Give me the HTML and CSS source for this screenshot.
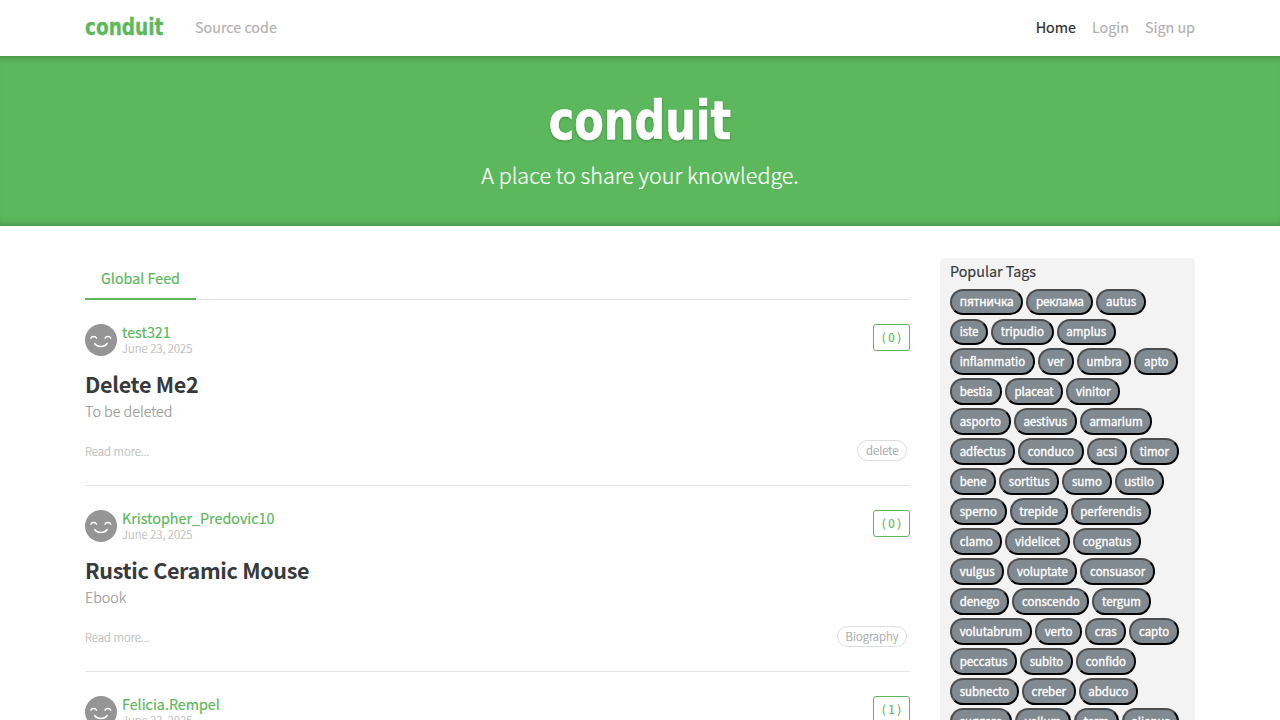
FILE: index.html
```html
<!DOCTYPE html>
<html lang="en">
<head>
<meta charset="utf-8">
<title>Conduit</title>
<link rel="stylesheet" href="styles.css">
</head>
<body>
<svg class="defs" width="0" height="0"><symbol id="smile" viewBox="0 0 32 32"><circle cx="16" cy="16" r="16" fill="#959595"/><path d="M5.8 14.2c.8-2.3 4.8-2.3 5.7 0M20 14.2c.9-2.3 4.9-2.3 5.8 0M9.6 19.5c2.7 4 9.9 4 12.6 0" fill="none" stroke="#fff" stroke-width="1.4" stroke-linecap="round"/></symbol></svg>
<nav class="navbar">
  <a class="brand">conduit</a>
  <a class="nav-link source">Source code</a>
  <div class="nav-right"><a class="nav-link active">Home</a><a class="nav-link">Login</a><a class="nav-link">Sign up</a></div>
</nav>
<header class="banner">
  <h1 class="logo">conduit</h1>
  <p class="tagline">A place to share your knowledge.</p>
</header>
<main class="container">
  <section class="feed">
    <div class="tabs"><a class="tab">Global Feed</a></div>
    <article class="preview">
      <div class="meta"><svg class="avatar"><use href="#smile"/></svg><div class="info"><a class="author">test321</a><span class="date">June 23, 2025</span></div><button class="like">( 0 )</button></div>
      <h2 class="title">Delete Me2</h2>
      <p class="desc">To be deleted</p>
      <div class="foot"><span class="more">Read more...</span><span class="outline-tag">delete</span></div>
    </article>
    <article class="preview">
      <div class="meta"><svg class="avatar"><use href="#smile"/></svg><div class="info"><a class="author">Kristopher_Predovic10</a><span class="date">June 23, 2025</span></div><button class="like">( 0 )</button></div>
      <h2 class="title">Rustic Ceramic Mouse</h2>
      <p class="desc">Ebook</p>
      <div class="foot"><span class="more">Read more...</span><span class="outline-tag">Biography</span></div>
    </article>
    <article class="preview">
      <div class="meta"><svg class="avatar"><use href="#smile"/></svg><div class="info"><a class="author">Felicia.Rempel</a><span class="date">June 23, 2025</span></div><button class="like">( 1 )</button></div>
    </article>
  </section>
  <aside class="sidebar">
    <p class="side-title">Popular Tags</p>
    <div class="tags">
      <div class="row"><button class="tag cyr">пятничка</button><button class="tag cyr tight">реклама</button><button class="tag">autus</button></div>
      <div class="row"><button class="tag">iste</button><button class="tag">tripudio</button><button class="tag">amplus</button></div>
      <div class="row"><button class="tag">inflammatio</button><button class="tag">ver</button><button class="tag">umbra</button><button class="tag">apto</button></div>
      <div class="row"><button class="tag">bestia</button><button class="tag">placeat</button><button class="tag">vinitor</button></div>
      <div class="row"><button class="tag">asporto</button><button class="tag">aestivus</button><button class="tag">armarium</button></div>
      <div class="row"><button class="tag">adfectus</button><button class="tag">conduco</button><button class="tag">acsi</button><button class="tag">timor</button></div>
      <div class="row"><button class="tag">bene</button><button class="tag">sortitus</button><button class="tag">sumo</button><button class="tag">ustilo</button></div>
      <div class="row"><button class="tag">sperno</button><button class="tag">trepide</button><button class="tag">perferendis</button></div>
      <div class="row"><button class="tag">clamo</button><button class="tag">videlicet</button><button class="tag">cognatus</button></div>
      <div class="row"><button class="tag">vulgus</button><button class="tag">voluptate</button><button class="tag">consuasor</button></div>
      <div class="row"><button class="tag">denego</button><button class="tag">conscendo</button><button class="tag">tergum</button></div>
      <div class="row"><button class="tag">volutabrum</button><button class="tag">verto</button><button class="tag">cras</button><button class="tag">capto</button></div>
      <div class="row"><button class="tag">peccatus</button><button class="tag">subito</button><button class="tag">confido</button></div>
      <div class="row"><button class="tag">subnecto</button><button class="tag">creber</button><button class="tag">abduco</button></div>
      <div class="row"><button class="tag">suggero</button><button class="tag">vellum</button><button class="tag">term</button><button class="tag">alienus</button></div>
    </div>
  </aside>
</main>
</body>
</html>
```
FILE: styles.css
```css
* { box-sizing: border-box; }
html, body { height: 720px; overflow: hidden; }
body { margin: 0; background: #fff; color: #373a3c; font-family: "Noto Sans CJK SC", sans-serif; font-size: 14.32px; line-height: 24px; -webkit-text-stroke: .2px; }
h1, h2, p { margin: 0; }
button { font-family: inherit; margin: 0; -webkit-text-stroke: .2px; }
.defs { position: absolute; }
.navbar { width: 1110px; height: 56px; margin: 0 auto; padding-bottom: 2px; display: flex; align-items: center; white-space: nowrap; }
.brand { width: 78px; margin-right: 32px; color: #5cb85c; font: 700 23.2px/30px "DejaVu Sans Condensed", "DejaVu Sans", sans-serif; font-stretch: condensed; transform: scaleX(.885); transform-origin: left; -webkit-text-stroke: .3px; }
.nav-link { color: #b2b2b2; }
.nav-link.active { color: #2d2d2d; }
.nav-right { display: flex; gap: 16px; margin-left: auto; }
.banner { height: 170px; padding-top: 34px; background: #5cb85c; color: #fff; text-align: center; box-shadow: inset 0 8px 8px -8px rgba(0,0,0,.3), inset 0 -8px 8px -8px rgba(0,0,0,.3); }
.logo { font: 700 54px/62px "DejaVu Sans Condensed", "DejaVu Sans", sans-serif; font-stretch: condensed; transform: scaleX(.885); text-shadow: 0 1px 3px rgba(0,0,0,.3); -webkit-text-stroke: .6px; }
.tagline { margin-top: 5px; font-size: 21.5px; font-weight: 300; line-height: 36px; }
.container { width: 1110px; margin: 32px auto 0; display: flex; gap: 30px; align-items: flex-start; }
.feed { width: 825px; }
.tabs { height: 42px; border-bottom: 1px solid #e0e0e0; display: flex; }
.tab { height: 42px; padding: 8px 16px 0; line-height: 24px; color: #5cb85c; border-bottom: 2px solid #5cb85c; }
.preview { height: 186px; padding-top: 24px; border-bottom: 1px solid #e5e5e5; }
.meta { height: 32px; display: flex; align-items: flex-start; }
.avatar { width: 32px; height: 32px; display: block; }
.info { margin-left: 5px; display: flex; flex-direction: column; }
.author { line-height: 15px; color: #5cb85c; }
.date { margin-top: 1px; font-size: 11.46px; font-weight: 300; line-height: 16px; color: #bbb; }
.like { margin-left: auto; width: 37px; height: 27px; padding: 0; border: 1px solid #5cb85c; border-radius: 3px; background: #fff; color: #5cb85c; font-size: 11.6px; line-height: 22px; }
.title { margin-top: 14px; font-size: 21.5px; font-weight: 700; line-height: 27px; letter-spacing: -.31px; white-space: nowrap; -webkit-text-stroke: 0; }
.desc { margin-top: 3px; font-size: 14.32px; font-weight: 300; line-height: 22px; color: #999; }
.foot { display: flex; justify-content: space-between; margin-top: 18px; padding-right: 3px; }
.more { font-size: 11.46px; font-weight: 300; line-height: 22px; color: #bbb; }
.outline-tag { height: 21px; padding: 0 7.7px; border: 1px solid #ddd; border-radius: 11px; font-size: 11.46px; font-weight: 300; line-height: 19px; color: #a2a2a2; }
.like { padding-bottom: 2px; }
.sidebar { width: 255px; height: 462px; overflow: hidden; padding: 4px 10px; background: #f3f3f3; border-radius: 4px 4px 0 0; }
.side-title { line-height: 18px; }
.tags { margin-top: 8.56px; display: flex; flex-direction: column; gap: 3.58px; }
.row { display: flex; gap: 3px; }
.tag { flex: none; height: 26.4px; padding: 0 7.68px 1.6px; border: 2px solid; border-color: #4c4c4c #000 #000 #4c4c4c; border-radius: 13.2px; background: #818a91; color: #fff; font-size: 11.46px; line-height: 20px; white-space: nowrap; -webkit-text-stroke: .35px; }
.cyr { font-family: "Noto Sans", sans-serif; font-size: 11.9px; }
.tight { letter-spacing: -.25px; }
```
